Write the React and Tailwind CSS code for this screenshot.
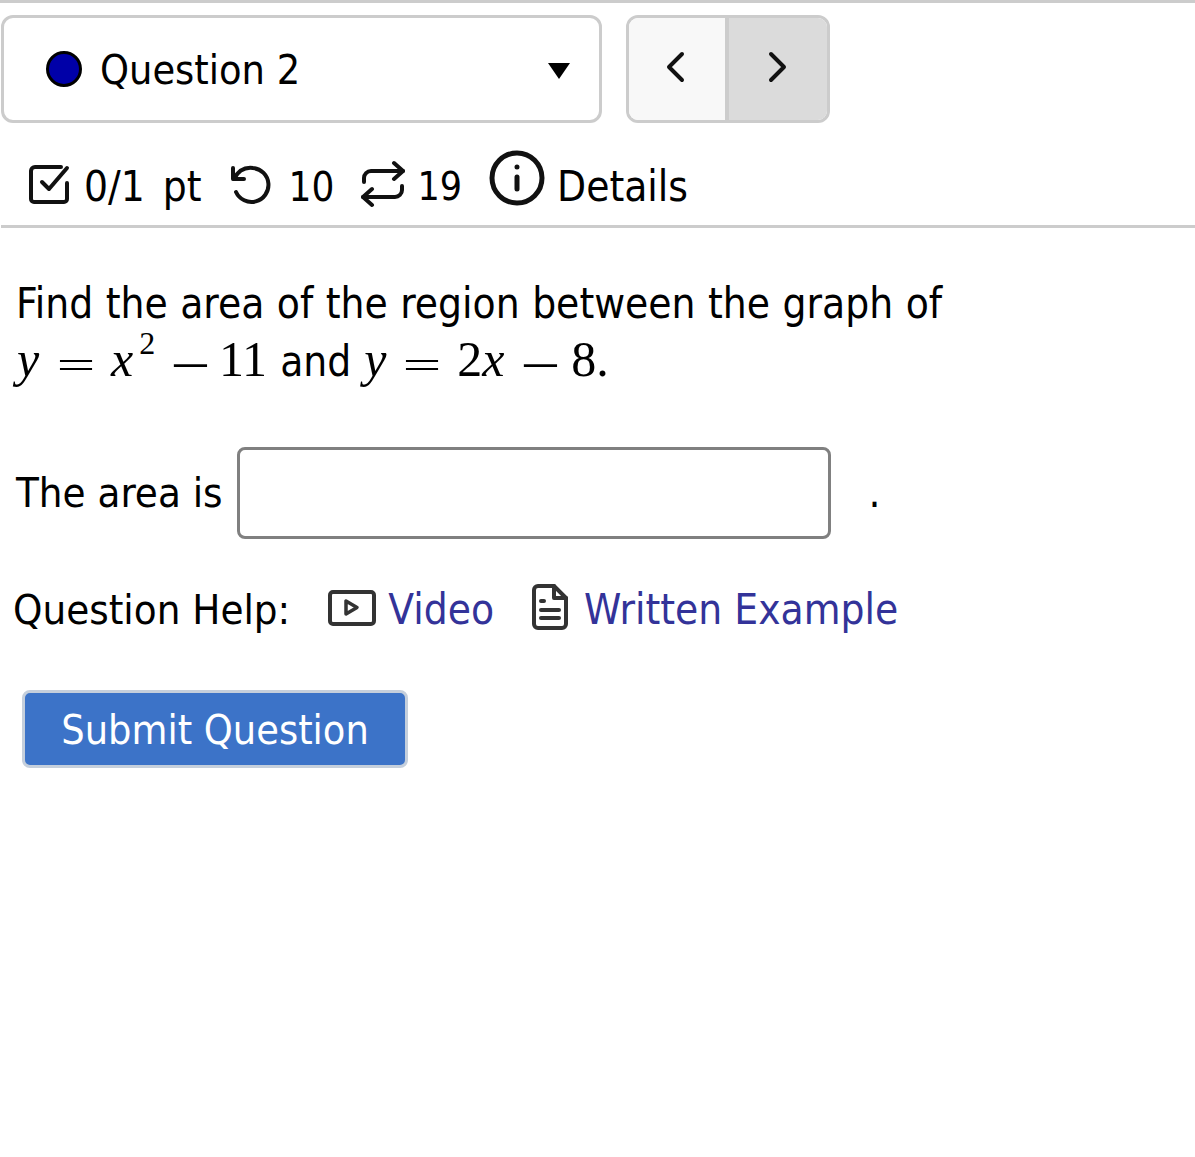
import React from "react";

const CheckIcon = () => (
  <svg width="44" height="44" viewBox="0 0 44 44" fill="none" stroke="#111" strokeWidth="4" strokeLinecap="round" strokeLinejoin="round">
    <path d="M34 5H8a4 4 0 0 0-4 4v28a3 3 0 0 0 3 3h30a3 3 0 0 0 3-3V21" />
    <path d="M15 20l7 7L40 6" />
  </svg>
);

const UndoIcon = () => (
  <svg width="44" height="44" viewBox="0 0 44 44" fill="none" stroke="#111" strokeWidth="4" strokeLinecap="round" strokeLinejoin="round">
    <path d="M4 6v11h11" />
    <path d="M5 17C9 9 16 5 24 6a17 17 0 1 1-17 24" />
  </svg>
);

const RepeatIcon = () => (
  <svg width="44" height="48" viewBox="0 0 44 48" fill="none" stroke="#111" strokeWidth="4" strokeLinecap="round" strokeLinejoin="round">
    <path d="M33 3l9 8-9 8" />
    <path d="M42 11H10a7 7 0 0 0-7 7v4" />
    <path d="M11 45l-9-8 9-8" />
    <path d="M2 37h32a7 7 0 0 0 7-7v-4" />
  </svg>
);

const InfoIcon = () => (
  <svg width="56" height="56" viewBox="0 0 56 56" fill="none" stroke="#111" strokeWidth="5" strokeLinecap="round">
    <circle cx="28" cy="28" r="25" />
    <path d="M28 27v12" />
    <circle cx="28" cy="17" r="1.5" fill="#111" strokeWidth="2" />
  </svg>
);

const VideoIcon = () => (
  <svg width="48" height="36" viewBox="0 0 48 36" fill="none" stroke="#333" strokeWidth="4" strokeLinejoin="round">
    <rect x="2" y="2" width="44" height="32" rx="3" />
    <path d="M18 11v13l11-6.500z" strokeWidth="3.500" />
  </svg>
);

const DocIcon = () => (
  <svg width="36" height="46" viewBox="0 0 36 46" fill="none" stroke="#333" strokeWidth="4" strokeLinejoin="round" strokeLinecap="round">
    <path d="M22 2H6a4 4 0 0 0-4 4v34a4 4 0 0 0 4 4h24a4 4 0 0 0 4-4V14z" />
    <path d="M22 2v12h12" />
    <path d="M9 17h3M9 26h18M9 34h18" />
  </svg>
);

// math glyphs, TeX-ish sizes
const Mi = ({ children, className = "" }) => (
  <i className={`font-['Liberation_Serif',serif] text-[50px] leading-[0] ${className}`}>{children}</i>
);
const Mn = ({ children, className = "" }) => (
  <span className={`font-['Liberation_Serif',serif] text-[50px] leading-[0] ${className}`}>{children}</span>
);
const Eq = ({ className = "" }) => (
  <span className={`inline-block scale-x-[1.15] scale-y-[0.62] font-['Liberation_Serif',serif] text-[60px] leading-[0] align-[-10px] ${className}`}>=</span>
);
const Minus = ({ className = "" }) => (
  <span className={`inline-block scale-x-[1.23] font-['Liberation_Serif',serif] text-[58px] leading-[0] align-[-9px] ${className}`}>−</span>
);

export default function App() {
  return (
    <div className="min-h-[1157px] bg-white font-['DejaVu_Sans_Condensed','DejaVu_Sans',sans-serif] [font-stretch:condensed] text-[42px] leading-[56px] text-black border-t-[3px] border-[#ccc]">
      <div className="flex items-start gap-6 pt-3 pl-px">
        <div className="w-[601px] h-[108px] border-[3px] border-[#ccc] rounded-xl flex items-center pl-[42px] pr-[29px]">
          <span className="w-9 h-9 rounded-full bg-[#0000a8] border-[3px] border-black" />
          <span className="ml-[18px] pt-[2px] text-[41px]">Question 2</span>
          <span className="ml-auto mt-[3px] w-0 h-0 border-x-[11px] border-x-transparent border-t-[16px] border-t-black" />
        </div>
        <div className="flex w-[204px] h-[108px] border-[3px] border-[#ccc] rounded-xl overflow-hidden">
          <div className="w-[96px] bg-[#f8f8f8] flex items-center justify-center pb-1 pr-1">
            <svg width="24" height="36" viewBox="0 0 24 36" fill="none" stroke="#111" strokeWidth="4" strokeLinecap="round" strokeLinejoin="round">
              <path d="M19 5L6 18l13 13" />
            </svg>
          </div>
          <div className="flex-1 bg-[#dbdbdb] border-l-4 border-[#ccc] flex items-center justify-center pb-1">
            <svg width="24" height="36" viewBox="0 0 24 36" fill="none" stroke="#111" strokeWidth="4" strokeLinecap="round" strokeLinejoin="round">
              <path d="M5 5l13 13L5 31" />
            </svg>
          </div>
        </div>
      </div>

      <div className="flex items-end h-[105px] pb-[10px] pl-[26px] border-b-[3px] border-[#ccc] ml-px">
        <span className="mb-[9px]"><CheckIcon /></span>
        <span className="ml-[13px] [word-spacing:6px]">0/1 pt</span>
        <span className="ml-[27px] mb-[9px]"><UndoIcon /></span>
        <span className="ml-[16px] text-[40px]">10</span>
        <span className="ml-[27px] mb-[7px]"><RepeatIcon /></span>
        <span className="ml-[12px] text-[39px]">19</span>
        <span className="ml-[27px] mb-[9px]"><InfoIcon /></span>
        <span className="ml-[12px]">Details</span>
      </div>

      <p className="pl-4 mt-[47px] leading-[58px]">
        <span className="[word-spacing:0.5px]">Find the area of the region between the graph of</span>
        <br />
        <Mi className="ml-px">y</Mi>
        <Eq className="ml-[20px]" />
        <Mi className="ml-[18px]">x</Mi>
        <sup className="font-['Liberation_Serif',serif] text-[32px] leading-none ml-[6px] top-[-22px]">2</sup>
        <Minus className="ml-[19px]" />
        <Mn className="ml-[12px]">11</Mn>
        <span className="ml-[13px]">and</span>
        <Mi className="ml-[13px]">y</Mi>
        <Eq className="ml-[19px]" />
        <Mn className="ml-[18px]">2</Mn>
        <Mi>x</Mi>
        <Minus className="ml-[20px]" />
        <Mn className="ml-[14px]">8.</Mn>
      </p>

      <div className="flex items-center pl-4 mt-[56px]">
        <span className="text-[41.6px]">The area is</span>
        <input className="ml-[14px] w-[594px] h-[92px] border-[3px] border-[#808080] rounded-lg bg-white" />
        <span className="ml-[38px]">.</span>
      </div>

      <div className="flex items-center pl-[13px] mt-[43px]">
        <span className="text-[41.6px]">Question Help:</span>
        <span className="ml-[38px] mb-[4px]"><VideoIcon /></span>
        <a className="ml-[12px] text-[#333399]">Video</a>
        <span className="ml-[38px] mb-[6px]"><DocIcon /></span>
        <a className="ml-[16px] text-[#333399]">Written Example</a>
      </div>

      <button className="block ml-[22px] mt-[52px] w-[386px] h-[78px] pt-px rounded-lg bg-[#3c73c8] border-[3px] border-[#c5cfdc] text-white text-[41px]">
        Submit Question
      </button>
    </div>
  );
}
